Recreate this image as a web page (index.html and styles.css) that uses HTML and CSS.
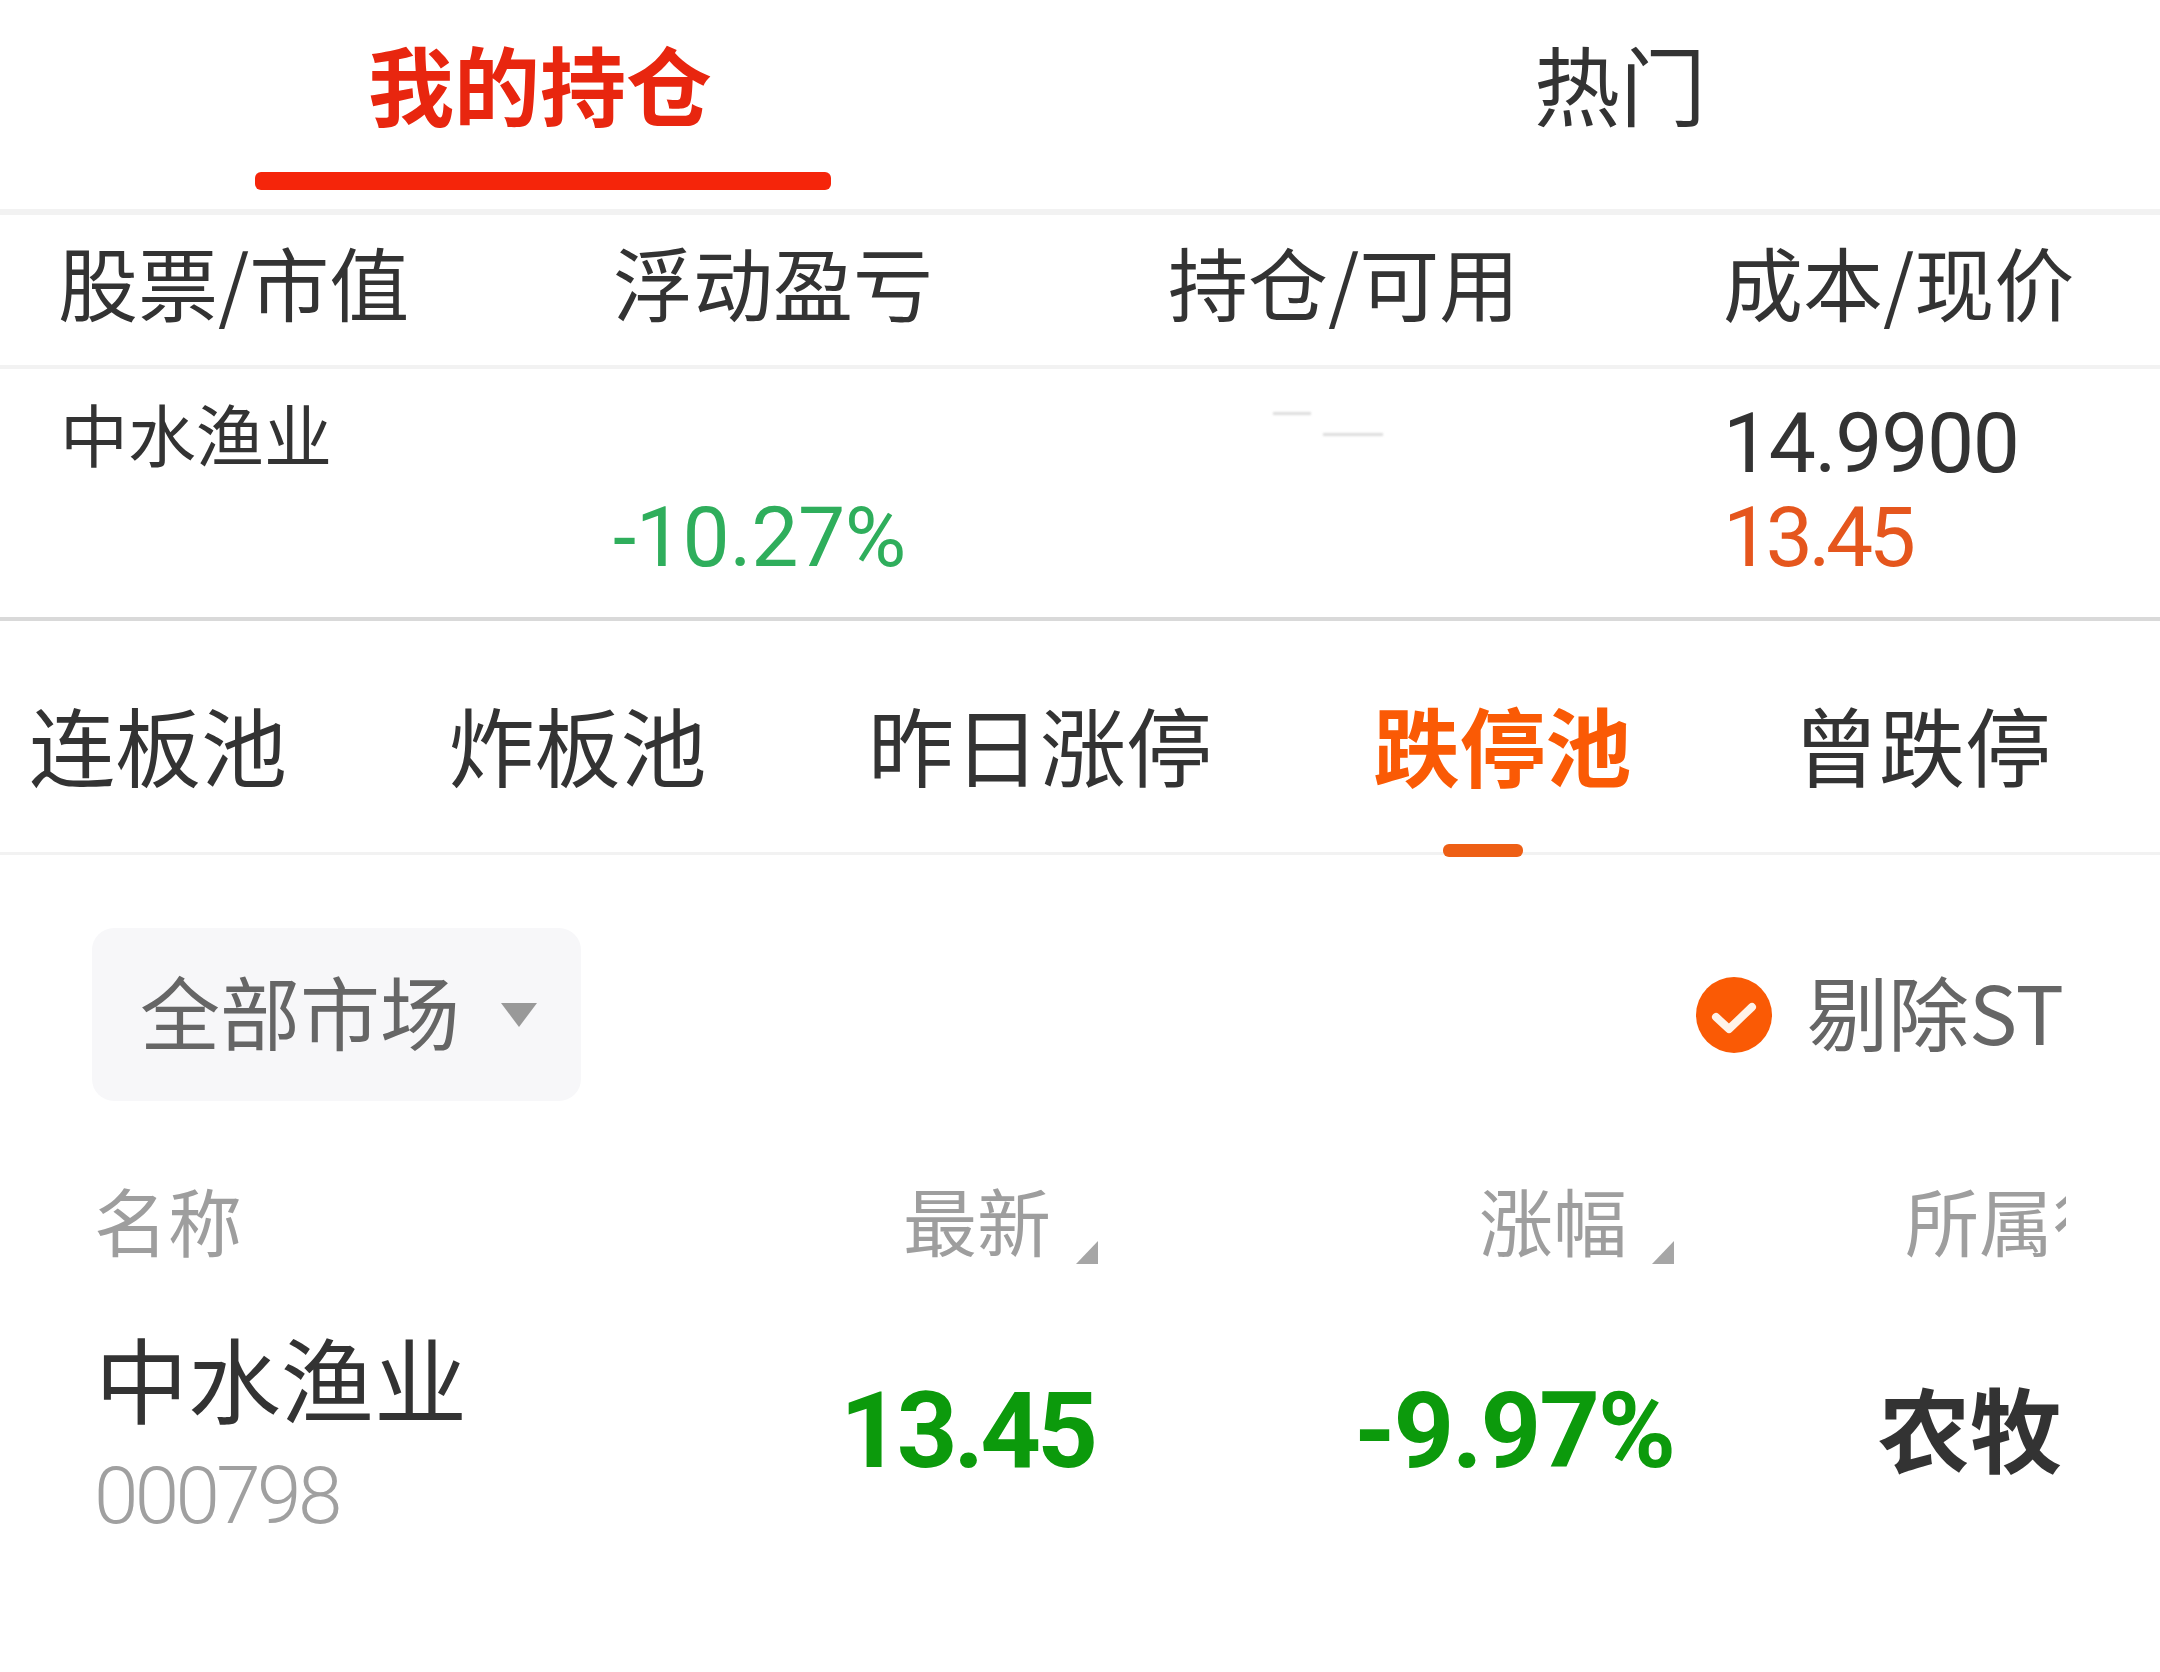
FILE: index.html
```html
<!DOCTYPE html>
<html lang="zh-CN">

<head>
    <meta charset="UTF-8">
    <title>持仓</title>
    <link rel="stylesheet" href="styles.css">
</head>

<body>
    <nav class="main-tabs">
        <div class="main-tab active">我的持仓</div>
        <div class="main-tab">热门</div>
    </nav>

    <div class="hold-head">
        <div>股票/市值</div>
        <div>浮动盈亏</div>
        <div>持仓/可用</div>
        <div>成本/现价</div>
    </div>

    <div class="hold-row">
        <div class="hold-name">中水渔业</div>
        <div class="hold-num hold-loss">-10.27%</div>
        <div class="hold-qty">
            <i class="smudge smudge-a"></i>
            <i class="smudge smudge-b"></i>
        </div>
        <div class="hold-num">
            <div class="hold-cost">14.9900</div>
            <div class="hold-now">13.45</div>
        </div>
    </div>

    <nav class="pool-tabs">
        <div class="pool-tab">连板池</div>
        <div class="pool-tab">炸板池</div>
        <div class="pool-tab">昨日涨停</div>
        <div class="pool-tab active">跌停池</div>
        <div class="pool-tab">曾跌停</div>
    </nav>

    <div class="filter-bar">
        <div class="market-select">
            <span class="filter-text">全部市场</span>
            <i class="select-arrow"></i>
        </div>
        <div class="st-check">
            <svg class="st-icon" viewBox="0 0 76 76">
                <circle cx="38" cy="38" r="38" fill="#fa5a05" />
                <path d="M20 40 L33 52 L56 30" fill="none" stroke="#fff3e8" stroke-width="8" stroke-linecap="round" stroke-linejoin="round" />
            </svg>
            <span class="filter-text st-text">剔除ST</span>
        </div>
    </div>

    <div class="pool-head">
        <div>名称</div>
        <div class="sort-col">最新<i class="sort-mark"></i></div>
        <div class="sort-col">涨幅<i class="sort-mark"></i></div>
        <div class="col-clip"><span>所属行业</span></div>
    </div>

    <div class="pool-row">
        <div class="stock">
            <div class="stock-name">中水渔业</div>
            <div class="stock-code">000798</div>
        </div>
        <div class="pool-num pool-price">13.45</div>
        <div class="pool-num pool-change">-9.97%</div>
        <div class="pool-sector">农牧</div>
    </div>
</body>

</html>
```

FILE: styles.css
```css
:root {
    --text: #333333;
    --muted: #9e9e9e;
    --grey: #666666;
    --orange: #fa5a05;
    --line: #f2f2f2;
}

* {
    box-sizing: border-box;
}

body {
    margin: 0;
    width: 2160px;
    height: 1672px;
    overflow: hidden;
    background-color: #ffffff;
    color: var(--text);
    font-family: "Noto Sans CJK SC", "Noto Sans", sans-serif;
}

i {
    display: block;
}

/* top tabs */
.main-tabs {
    display: flex;
    height: 215px;
    border-bottom: 6px solid var(--line);
}

.main-tab {
    position: relative;
    flex: 1;
    padding-top: 22px;
    font-size: 86px;
    line-height: 122px;
    text-align: center;
}

.main-tab.active {
    color: #e8260f;
    font-weight: 700;
}

.main-tab.active::after {
    content: "";
    position: absolute;
    left: 255px;
    top: 172px;
    width: 576px;
    height: 18px;
    border-radius: 6px;
    background-color: #f5250a;
}

/* holdings table */
.hold-head,
.hold-row {
    display: grid;
    grid-template-columns: repeat(4, 555px);
    padding-left: 58px;
}

.hold-head {
    height: 154px;
    border-bottom: 4px solid var(--line);
    font-size: 80px;
    line-height: 130px;
}

.hold-row {
    height: 252px;
    border-bottom: 4px solid #d9d9d9;
}

.hold-name {
    padding: 16px 0 0 2px;
    font-size: 68px;
    line-height: 96px;
}

.hold-num {
    padding-top: 28px;
    font-family: Roboto, sans-serif;
    font-size: 84px;
    line-height: 94px;
}

.hold-loss {
    padding-top: 122px;
    color: #2fae5c;
    letter-spacing: -0.4px;
}

.hold-cost {
    letter-spacing: -1.4px;
}

.hold-now {
    color: #e5561d;
    letter-spacing: -4.5px;
}

.hold-qty {
    position: relative;
}

.smudge {
    position: absolute;
    height: 3px;
    background-color: #dddddd;
    filter: blur(1px);
}

.smudge-a {
    left: 105px;
    top: 43px;
    width: 38px;
}

.smudge-b {
    left: 155px;
    top: 64px;
    width: 60px;
}

/* pool tabs */
.pool-tabs {
    display: flex;
    gap: 161.5px;
    height: 234px;
    padding: 61px 0 0 29px;
    border-bottom: 3px solid var(--line);
}

.pool-tab {
    position: relative;
    font-size: 86px;
    line-height: 124px;
    white-space: nowrap;
}

.pool-tab.active {
    color: var(--orange);
    font-weight: 700;
}

.pool-tab.active::after {
    content: "";
    position: absolute;
    left: 69px;
    top: 162px;
    width: 80px;
    height: 13px;
    border-radius: 6px;
    background-color: #ee5f15;
}

/* filter */
.filter-bar {
    display: flex;
    justify-content: space-between;
    align-items: center;
    height: 173px;
    margin-top: 73px;
    padding: 0 96px 0 92px;
    color: var(--grey);
    font-size: 80px;
}

.filter-text {
    padding-bottom: 11px;
}

.market-select {
    display: flex;
    align-items: center;
    gap: 41px;
    width: 489px;
    height: 173px;
    padding-left: 48px;
    border-radius: 22px;
    background-color: #f7f7f9;
}

.select-arrow {
    width: 0;
    height: 0;
    border-top: 24px solid #999999;
    border-left: 18px solid transparent;
    border-right: 18px solid transparent;
}

.st-check {
    display: flex;
    align-items: center;
    gap: 35px;
}

.st-text {
    font-size: 81px;
}

.st-icon {
    display: block;
    width: 76px;
    height: 76px;
}

/* pool list */
.pool-head,
.pool-row {
    display: grid;
    grid-template-columns: 400px 604px 576px 392px;
    padding-left: 94px;
}

.pool-head {
    margin-top: 68px;
    height: 100px;
    color: var(--muted);
    font-size: 74px;
    line-height: 100px;
}

.sort-col {
    display: flex;
    justify-content: flex-end;
    gap: 25px;
}

.sort-mark {
    align-self: flex-end;
    width: 0;
    height: 0;
    margin-bottom: 5px;
    border-bottom: 23px solid #a6a6a6;
    border-left: 22px solid transparent;
}

.col-clip {
    overflow: hidden;
    padding-left: 231px;
}

.col-clip span {
    white-space: nowrap;
}

.pool-row {
    margin-top: 47px;
    align-items: center;
}

.stock-name {
    margin-bottom: 15px;
    padding-left: 1px;
    font-size: 93px;
    line-height: 122px;
    white-space: nowrap;
}

.stock-code {
    font-family: Roboto, sans-serif;
    font-size: 80px;
    font-weight: 300;
    line-height: 86px;
    letter-spacing: -3.6px;
    color: #a0a0a0;
}

.pool-num {
    padding-top: 7px;
    font-family: Roboto, sans-serif;
    font-size: 106px;
    font-weight: 700;
    line-height: 120px;
    color: #0c9a0c;
    text-align: right;
}

.pool-price {
    padding-right: 4px;
    letter-spacing: -4px;
}

.pool-change {
    letter-spacing: -2.2px;
}

.pool-sector {
    padding: 0 4px 5px 0;
    font-size: 92px;
    font-weight: 700;
    text-align: right;
}
```
